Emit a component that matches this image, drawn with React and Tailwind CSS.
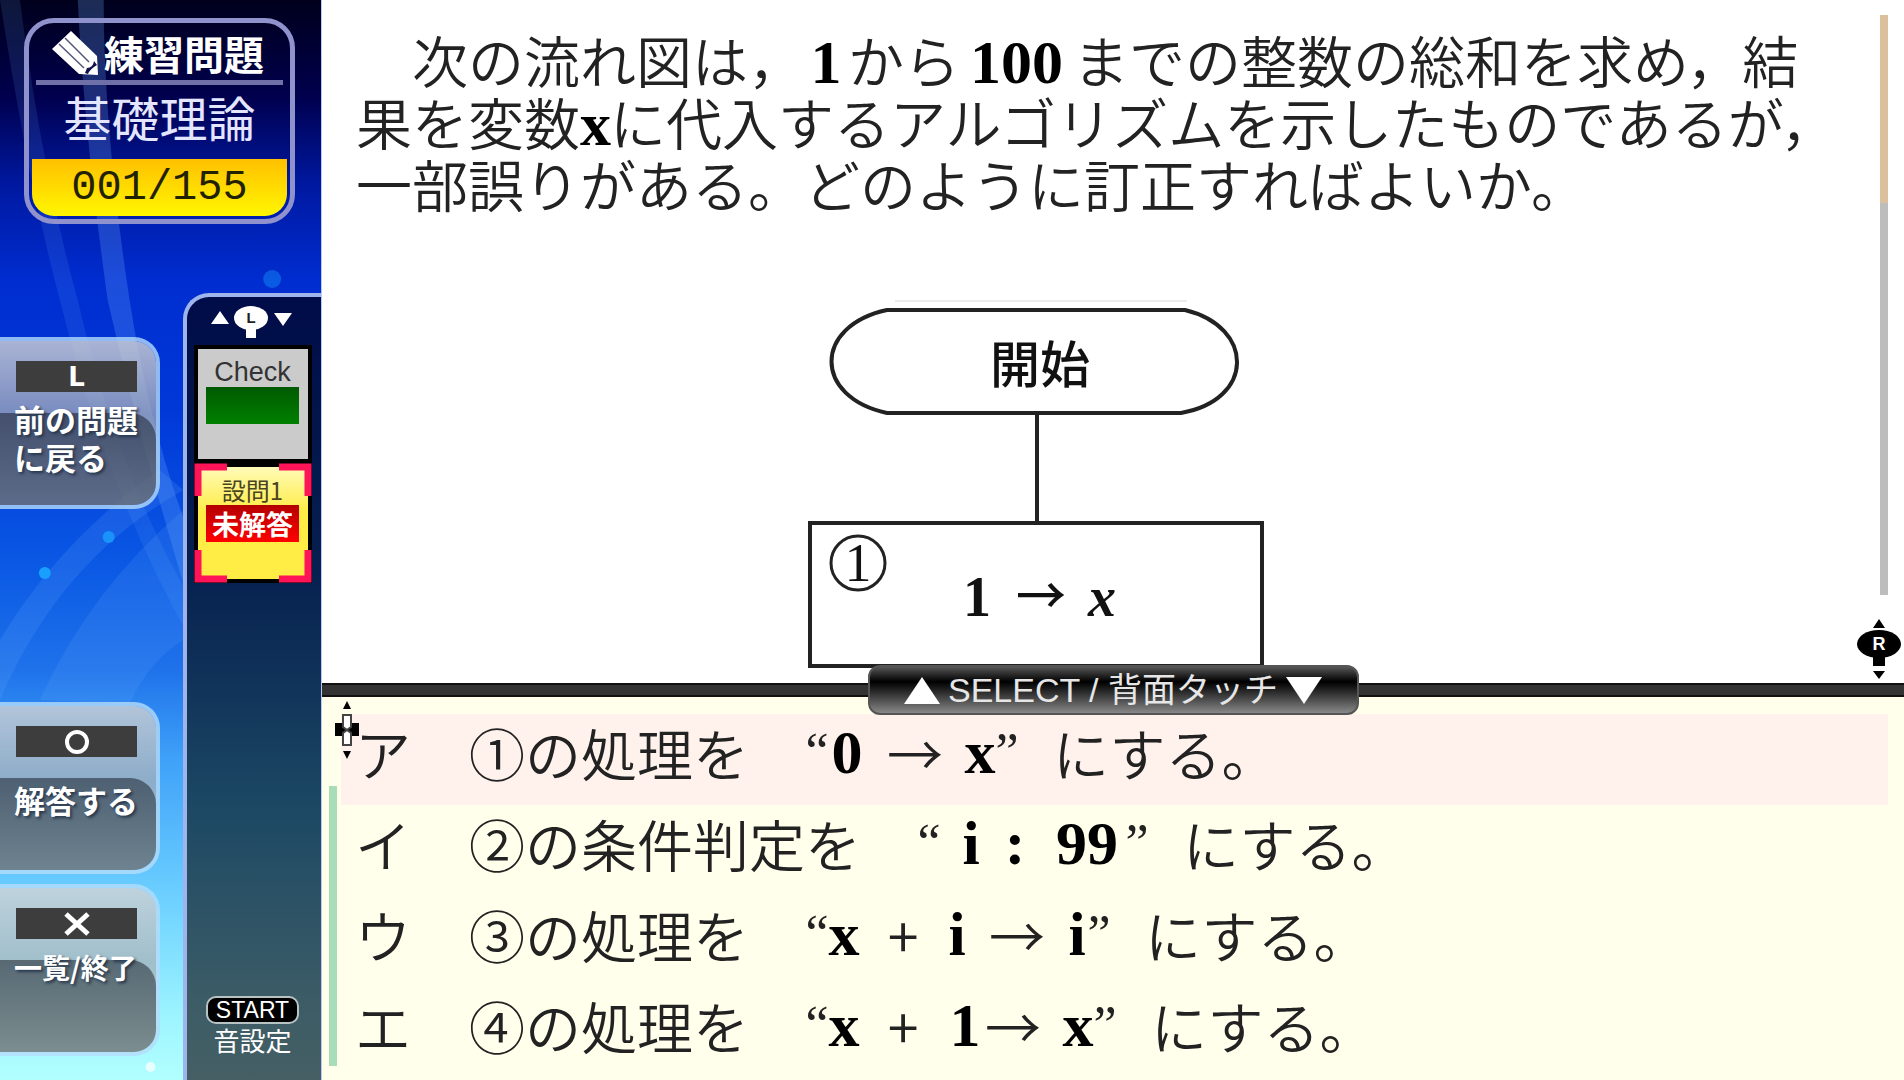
import { useState } from "react";

// w = width of the cell each token sits in
const widths = {
  thin: "w-6",
  letter: "w-[34px]",
  plus: "w-11",
  digit: "w-10",
  digits: "w-20",
  arrow: "w-14",
};

const choices = [
  {
    key: "ア",
    text: "①の処理を",
    tokens: [["0", "digit"], ["→", "arrow"], ["x", "letter"]],
  },
  {
    key: "イ",
    text: "②の条件判定を",
    lead: true,
    tokens: [["i", "thin"], [":", "thin"], ["99", "digits"]],
  },
  {
    key: "ウ",
    text: "③の処理を",
    tokens: [["x", "letter"], ["+", "plus"], ["i", "thin"], ["→", "arrow"], ["i", "thin"]],
  },
  {
    key: "エ",
    text: "④の処理を",
    tokens: [["x", "letter"], ["+", "plus"], ["1", "digit"], ["→", "arrow", true], ["x", "letter"]],
  },
];

function Token({ value, kind, tight }) {
  const sans = kind === "arrow" || kind === "plus";
  return (
    <span
      className={`flex justify-center ${widths[kind]} ${tight ? "-ml-5" : ""} ${
        sans
          ? "text-[56px]"
          : "font-['Liberation_Serif',serif] font-bold text-[62px] text-black"
      }`}
    >
      {value}
    </span>
  );
}

function Quote({ children }) {
  return (
    <span className="flex w-5 justify-center font-['Liberation_Serif',serif] text-[52px]">
      {children}
    </span>
  );
}

function Choice({ choice, selected, onSelect }) {
  return (
    <button
      type="button"
      aria-pressed={selected}
      onClick={onSelect}
      className={`flex h-[91px] w-full items-center whitespace-nowrap pb-4 pl-[14px] text-left text-[56px] leading-[64px] ${
        selected ? "bg-[#fff2ec]" : ""
      }`}
    >
      <span className="w-[114px]">{choice.key}</span>
      <span className="mr-[58px]">{choice.text}</span>
      <Quote>“</Quote>
      <span className={`flex gap-5 ${choice.lead ? "ml-5" : ""}`}>
        {choice.tokens.map(([value, kind, tight], i) => (
          <Token key={i} value={value} kind={kind} tight={tight} />
        ))}
      </span>
      <Quote>”</Quote>
      <span className="ml-9">にする。</span>
    </button>
  );
}

function SideButton({ symbol, children }) {
  return (
    <button
      type="button"
      className="relative flex h-[172px] w-[160px] flex-col overflow-hidden rounded-r-[26px] border-y-4 border-r-4 border-[#b4dcfc]/80 bg-[linear-gradient(180deg,rgba(212,212,212,0.8)_0%,rgba(172,175,180,0.7)_45%,rgba(180,180,180,0.7)_100%)] bg-clip-padding pl-[14px] pt-5 text-left text-[31px] font-bold leading-[38px] text-white"
    >
      <span className="absolute inset-x-0 bottom-0 top-[72px] rounded-tr-[26px] bg-[linear-gradient(180deg,rgba(15,20,28,0.5),rgba(30,35,38,0.36))]" />
      <span className="relative mb-2 ml-[2px] flex h-[31px] w-[121px] items-center justify-center bg-[#3d3d3d]">
        {symbol}
      </span>
      <span className="relative whitespace-nowrap [text-shadow:2px_2px_3px_#26364c]">{children}</span>
    </button>
  );
}

function Backdrop() {
  return (
    <svg
      className="absolute inset-0 h-full w-full"
      viewBox="0 0 322 1080"
      preserveAspectRatio="none"
      aria-hidden="true"
    >
      <g fill="#6fb0ff">
        <path d="M78 0 Q84 130 108 300 Q140 440 192 610 L192 540 Q150 430 130 300 Q104 130 104 0Z" opacity=".25" />
        <path d="M0 0 Q28 180 60 300 Q110 500 192 640 L192 600 Q120 480 78 300 Q42 170 20 0Z" opacity=".13" />
        <path d="M0 640 Q60 540 160 470 L184 490 Q60 560 0 700Z" opacity=".16" />
        <path d="M40 700 Q90 590 184 510 L184 640 Q150 660 130 704Z" opacity=".14" />
      </g>
      <g fill="#19a0ff">
        <circle cx="273" cy="279" r="9" opacity=".4" />
        <circle cx="109" cy="537" r="6" opacity=".8" />
        <circle cx="45" cy="573" r="6" />
        <circle cx="151" cy="1067" r="5" fill="#ffffff" opacity=".7" />
      </g>
    </svg>
  );
}

function PencilIcon() {
  return (
    <svg className="h-11 w-12" viewBox="0 0 48 44" aria-hidden="true">
      <path d="M19 0 L45 25 L46 44 L27 43 L0 18Z" fill="#fff" />
      <path d="M13 7 L37 31 M7 13 L32 37" stroke="#55557a" strokeWidth="1.5" />
      <path d="M42 30 Q41 37 35 37 L33 42 L36 43 Q38 38 45 34Z" fill="#11114a" />
    </svg>
  );
}

function StickIcon() {
  return (
    <svg className="h-[36px] w-[84px]" viewBox="0 0 84 36" aria-hidden="true">
      <g fill="#fff">
        <path d="M0 19 L9 6 L18 19Z" />
        <path d="M63 8 L81 8 L72 21Z" />
        <ellipse cx="40" cy="13" rx="17" ry="12" />
        <path d="M35 20 H45 V33 H35Z" />
      </g>
      <text x="40" y="18" textAnchor="middle" fontFamily="Liberation Sans, sans-serif" fontWeight="700" fontSize="15" fill="#222">
        L
      </text>
    </svg>
  );
}

function Sidebar() {
  return (
    <aside className="relative flex w-[322px] shrink-0 flex-col overflow-hidden border-r border-[#b9c8f0] bg-[linear-gradient(180deg,#00001c_0%,#00004e_9%,#0018a0_17%,#002dd0_26%,#0038d8_38%,#0a58e4_52%,#1f72ea_62%,#3ea0f8_70%,#68ccff_82%,#9cf4ff_94%,#b2ffff_100%)]">
      <Backdrop />
      <section className="relative ml-6 mt-[18px] flex h-[206px] w-[271px] flex-col rounded-[30px] border-[5px] border-[#8f92cc] p-[3px]">
        <h1 className="mx-1 flex h-[59px] items-center gap-1 border-b-[5px] border-[#6f70a8] pl-4 text-[40px] font-bold leading-none text-white">
          <PencilIcon />
          <span className="whitespace-nowrap">練習問題</span>
        </h1>
        <p className="flex flex-1 items-center justify-center pb-3 text-[48px] leading-none text-[#e4e6ff]">基礎理論</p>
        <p className="flex h-[57px] items-center justify-center rounded-b-[22px] bg-[linear-gradient(180deg,#ffc000,#fff600)] font-['Liberation_Mono',monospace] text-[42px] leading-none text-[#222200]">
          001/155
        </p>
      </section>

      <div className="relative mt-[69px] flex flex-1 justify-between">
        <nav className="flex flex-col pb-6 pt-11">
          <SideButton
            symbol={<span className="font-['DejaVu_Sans',sans-serif] text-[26px] leading-none">L</span>}
          >
            前の問題
            <br />
            に戻る
          </SideButton>
          <div className="mt-auto flex flex-col gap-[10px]">
            <SideButton
              symbol={
                <svg className="h-7 w-7" viewBox="0 0 28 28" fill="none" stroke="#fff" strokeWidth="4" aria-hidden="true">
                  <circle cx="14" cy="14" r="10" />
                </svg>
              }
            >
              <span className="mt-4 block">解答する</span>
            </SideButton>
            <SideButton
              symbol={
                <svg className="h-7 w-7" viewBox="0 0 28 28" stroke="#fff" strokeWidth="5" aria-hidden="true">
                  <path d="M3 4 L25 24 M25 4 L3 24" />
                </svg>
              }
            >
              <span className="text-[28px]">一覧/終了</span>
            </SideButton>
          </div>
        </nav>

        <div className="flex w-[138px] flex-col items-center rounded-tl-[26px] border-l-4 border-t-4 border-[#9db4ec] bg-[linear-gradient(180deg,#000c48_0%,#06204f_35%,#1c4864_65%,#3c5c66_90%,#455f64_100%)] pr-[3px] pt-2">
          <StickIcon />
          <div className="mt-1 bg-black p-1">
            <button
              type="button"
              className="flex h-[110px] w-[110px] flex-col items-center bg-[#cbcbcb] pt-2 font-['Liberation_Sans',sans-serif] text-[27px] leading-[30px] text-[#333]"
            >
              Check
              <span className="h-[37px] w-[93px] bg-[linear-gradient(180deg,#005a00,#008000)]" />
            </button>
            <button
              type="button"
              className="relative mt-2 flex h-[112px] w-[110px] flex-col items-center bg-[linear-gradient(180deg,#fffbb8,#ffec45_40%)] pt-2 text-[24px] leading-[30px] text-[#4a4420]"
            >
              設問1
              <span className="flex h-[37px] w-[93px] items-center justify-center bg-[linear-gradient(180deg,#b40000,#ff0000)] text-[27px] font-bold text-white">
                未解答
              </span>
              <svg className="absolute -inset-1 h-[120px] w-[118px]" viewBox="0 0 118 120" fill="none" stroke="#ff1458" strokeWidth="7" aria-hidden="true">
                <path d="M4 33 V4 H33 M85 4 H114 V33 M4 87 V116 H33 M85 116 H114 V87" />
              </svg>
            </button>
          </div>
          <button type="button" className="mb-6 mt-auto flex flex-col items-center text-[26px] leading-8 text-white">
            <span className="rounded-[10px] border-2 border-[#b8c4c4] bg-black px-2 font-['Liberation_Sans',sans-serif] text-[23px] leading-6">
              START
            </span>
            音設定
          </button>
        </div>
      </div>
    </aside>
  );
}

function Flowchart() {
  return (
    <svg className="ml-[451px] mt-[85px] h-[370px] w-[460px] shrink-0" viewBox="0 0 460 370" role="img" aria-label="流れ図">
      <path d="M88 2 H380" stroke="#ececec" strokeWidth="2" />
      <g fill="none" stroke="#222" strokeWidth="4">
        <path d="M80 11 H378 C448 28 448 101 374 114 H80 C6 98 6 27 80 11Z" />
        <path d="M230 114 V224" />
        <path d="M3 224 H455 V367 H3Z" />
        <circle cx="51" cy="264" r="27" strokeWidth="3" />
      </g>
      <g fill="#111" fontFamily="Liberation Serif, serif">
        <text x="233" y="84" textAnchor="middle" fontSize="50" fontWeight="500" fontFamily="Noto Sans CJK JP, sans-serif">開始</text>
        <text x="51" y="282" textAnchor="middle" fontSize="54">1</text>
        <text x="170" y="317" textAnchor="middle" fontSize="56" fontWeight="700">1</text>
        <text x="234" y="315" textAnchor="middle" fontSize="50" fontWeight="500" fontFamily="Noto Sans CJK JP, sans-serif">→</text>
        <text x="295" y="317" textAnchor="middle" fontSize="56" fontWeight="700" fontStyle="italic">x</text>
      </g>
    </svg>
  );
}

function RightStickIcon() {
  return (
    <svg className="h-[60px] w-[46px]" viewBox="0 0 46 60" aria-hidden="true">
      <path d="M22 0 L28 9 H16Z M22 60 L28 52 H16Z M16 30 H28 V47 H16Z" />
      <ellipse cx="22" cy="25" rx="22" ry="14" />
      <text x="22" y="31" textAnchor="middle" fontFamily="Liberation Sans, sans-serif" fontWeight="700" fontSize="18" fill="#fff">
        R
      </text>
    </svg>
  );
}

function PadIcon() {
  return (
    <svg className="absolute left-[13px] top-1 h-[58px] w-6" viewBox="0 0 24 58" aria-hidden="true">
      <path d="M12 0 L16 8 H8Z M12 58 L16 50 H8Z M0 22 H24 V35 H0Z" />
      <path d="M8 14 H16 V26 L12 29 L8 26Z M8 44 H16 V32 L12 29 L8 32Z" fill="#fff" stroke="#444" strokeWidth="2" />
    </svg>
  );
}

function Serif({ className, children }) {
  return (
    <span className={`inline-block indent-0 text-center font-['Liberation_Serif',serif] text-[62px] font-bold leading-[44px] text-black ${className}`}>
      {children}
    </span>
  );
}

export default function App() {
  const [selected, setSelected] = useState("ア");

  return (
    <div className="flex h-screen overflow-hidden bg-white font-['Noto_Sans_CJK_JP',sans-serif] text-[#222]">
      <Sidebar />
      <main className="flex min-w-0 flex-1 flex-col">
        <section className="flex min-h-0 flex-1 overflow-hidden">
          <div className="flex min-w-0 flex-1 flex-col pl-[34px] pt-7">
            <p className="indent-14 whitespace-nowrap text-[56px] font-[350] leading-[62px]">
              次の流れ図は，<Serif className="w-11">1</Serif>から<Serif className="w-[113px]">100</Serif>までの整数の総和を求め，結
              <br />
              果を変数<Serif className="w-[30px]">x</Serif>に代入するアルゴリズムを示したものであるが，
              <br />
              一部誤りがある。どのように訂正すればよいか。
            </p>
            <Flowchart />
          </div>
          <div className="flex w-12 shrink-0 flex-col items-center pt-[15px]">
            <div className="ml-2 h-[580px] w-2 bg-[#bdbdbd]">
              <div className="h-[188px] bg-[#dcbf9c]" />
            </div>
            <div className="mt-6">
              <RightStickIcon />
            </div>
          </div>
        </section>

        <div className="relative flex h-[14px] shrink-0 items-center justify-center border-y-2 border-[#111] bg-[#333]">
          <button
            type="button"
            className="absolute z-10 flex h-[50px] w-[491px] items-center justify-center gap-2 whitespace-nowrap rounded-xl border-2 border-[#555] bg-[linear-gradient(180deg,#555_0%,#000_32%,#222_50%,#888_100%)] font-['Liberation_Sans','Noto_Sans_CJK_JP',sans-serif] text-[34px] leading-none text-[#e6e6e6]"
          >
            <svg className="h-[27px] w-9" viewBox="0 0 36 27" fill="#fff" aria-hidden="true">
              <path d="M18 0 L36 27 H0Z" />
            </svg>
            SELECT / 背面タッチ
            <svg className="h-[27px] w-9" viewBox="0 0 36 27" fill="#fff" aria-hidden="true">
              <path d="M0 0 H36 L18 27Z" />
            </svg>
          </button>
        </div>

        <section className="relative flex shrink-0 bg-[#ffffec] pb-[2px] pr-4 pt-[17px] font-[350]">
          <div className="mb-3 ml-[7px] mt-[72px] w-2 shrink-0 bg-[#a9dcb9]" />
          <div className="ml-1 min-w-0 flex-1">
            {choices.map((choice) => (
              <Choice
                key={choice.key}
                choice={choice}
                selected={selected === choice.key}
                onSelect={() => setSelected(choice.key)}
              />
            ))}
          </div>
          <PadIcon />
        </section>
      </main>
    </div>
  );
}
